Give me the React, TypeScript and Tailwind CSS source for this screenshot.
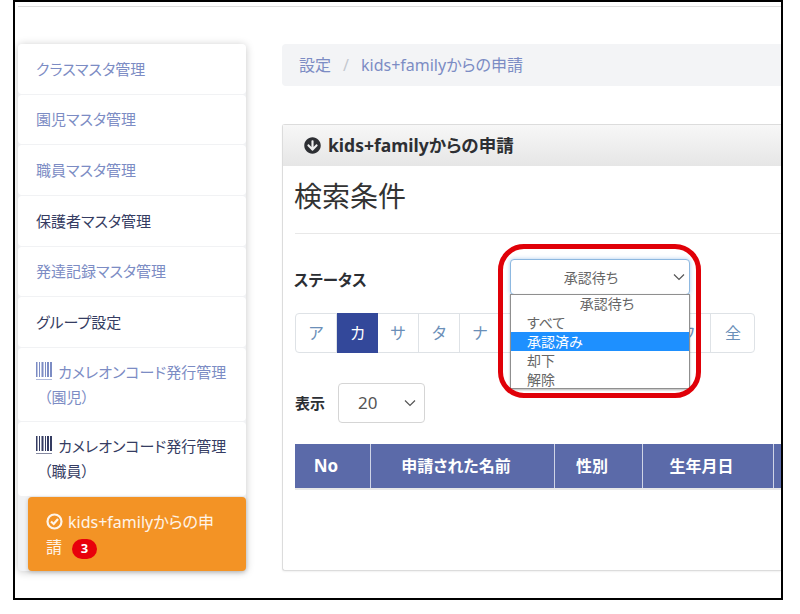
import React from "react";
import { FaArrowCircleDown } from "react-icons/fa";

const F = { fontFamily: '"Noto Sans","Noto Sans CJK JP",sans-serif' };

function Barcode({ color }: { color: string }) {
  return (
    <svg width="17" height="19" viewBox="0 0 17 19" className="inline-block align-[-3px] mr-[5px]" fill={color}>
      <rect x="0" y="0" width="1.5" height="15" />
      <rect x="3" y="0" width="1" height="15" />
      <rect x="5.5" y="0" width="2" height="15" />
      <rect x="9" y="0" width="1" height="15" />
      <rect x="11" y="0" width="2" height="15" />
      <rect x="14" y="0" width="2" height="15" />
      <rect x="0" y="17" width="16" height="1" opacity="0.6" />
    </svg>
  );
}

function Item({ children, dark, h = 50 }: { children: React.ReactNode; dark?: boolean; h?: number }) {
  return (
    <div
      className={`bg-white rounded-[4px] mb-px px-[18px] flex items-center text-[15px] leading-[25px] ${dark ? "text-[#353c62]" : "text-[#7c8cc4]"}`}
      style={{ height: h }}
    >
      <div>{children}</div>
    </div>
  );
}

const kana = ["ア", "カ", "サ", "タ", "ナ", "ハ", "マ", "ヤ", "ラ"];

function Chevron({ className }: { className: string }) {
  return (
    <svg viewBox="0 0 12 8" width="12" height="8" className={className} fill="none" stroke="#555" strokeWidth="1.2">
      <path d="M1 1.5 L6 6.5 L11 1.5" />
    </svg>
  );
}

export default function App() {
  return (
    <div className="w-[800px] h-[614px] bg-white overflow-hidden [font-feature-settings:'palt']" style={F}>
      <div className="relative ml-[13px] w-[770px] h-[600px] border-2 border-black overflow-hidden flex bg-white">
        <div className="absolute left-[3px] right-0 top-[4px] h-px bg-[#dddddd]" />

        {/* Sidebar */}
        <div className="ml-[3px] mt-[42px] w-[228px] h-[527px] shrink-0 rounded-[4px] bg-[#f1f2f4] shadow-[0_1px_8px_rgba(0,0,0,0.22)]">
          <Item>クラスマスタ管理</Item>
          <Item h={49}>園児マスタ管理</Item>
          <Item>職員マスタ管理</Item>
          <Item dark>保護者マスタ管理</Item>
          <Item h={49}>発達記録マスタ管理</Item>
          <Item dark>グループ設定</Item>
          <Item h={73}>
            <Barcode color="#7c8cc4" />
            <span>カメレオンコード発行管理</span>
            <br />
            <span className="ml-[8px]">（園児）</span>
          </Item>
          <Item dark h={74}>
            <Barcode color="#353c62" />
            <span>カメレオンコード発行管理</span>
            <br />
            <span className="ml-[8px]">（職員）</span>
          </Item>
          <div className="ml-[10px] h-[74px] rounded-[4px] bg-[#f39325] text-white/90 text-[16px] leading-[25px] px-[18px] pt-[13px] shadow-[0_1px_4px_rgba(0,0,0,0.2)]">
            <svg width="17" height="17" viewBox="0 0 17 17" className="inline-block align-[-2px] mr-[5px]" fill="none" stroke="currentColor" strokeWidth="2.2">
              <circle cx="8.5" cy="8.5" r="7" />
              <path d="M5 8.5 L7.7 11 L12 6" />
            </svg>
            kids+familyからの申請
            <span className="inline-flex items-center justify-center ml-[10px] w-[25px] h-[20px] rounded-full bg-[#e8000b] text-white text-[13px] font-bold leading-none">
              3
            </span>
          </div>
        </div>

        {/* Main */}
        <div className="ml-[36px] mt-[42px] flex-1 min-w-0">
          <div className="h-[42px] rounded-l-[4px] bg-[#f3f4f6] flex items-center px-[17px] text-[16px] text-[#7c8cc4]">
            設定<span className="mx-[12px] text-[#c4c8cf]">/</span>kids+familyからの申請
          </div>
          <div className="mt-[38px] h-[447px] border border-r-0 border-[#dcdcdc] rounded-l-[3px] bg-white shadow-[0_1px_2px_rgba(0,0,0,0.06)]">
            <div className="h-[41px] flex items-center px-[21px] bg-gradient-to-b from-[#f7f7f7] to-[#e6e6e6] text-[#2d2f33] text-[17.5px] font-bold">
              <FaArrowCircleDown className="text-[17px] mr-[7px]" />
              kids+familyからの申請
            </div>
            <div className="px-[12px]">
              <div className="h-[67px] flex items-center -ml-px pb-[8px] text-[28px] text-[#333]">検索条件</div>
              <div className="h-px bg-[#e8e8e8] -mr-[12px]" />
              <div className="h-[79px] flex items-center -ml-px text-[15.5px] font-bold text-[#2b2e33] pt-[14px]">ステータス</div>
              <div className="flex h-[40px] w-[460px] border border-[#dee2e6] rounded-[4px] text-[16px] text-[#6b8fb8]">
                {kana.map((k) => (
                  <div
                    key={k}
                    className={
                      k === "カ"
                        ? "w-[41px] -my-px flex items-center justify-center bg-[#33489a] text-white"
                        : "w-[41px] flex items-center justify-center border-r border-[#dee2e6]"
                    }
                  >
                    {k}
                  </div>
                ))}
                <div className="w-[46px] flex items-center justify-center border-r border-[#dee2e6]">ワ</div>
                <div className="flex-1 flex items-center justify-center pl-[1px]">全</div>
              </div>
              <div className="mt-[30px] flex items-center h-[40px]">
                <span className="text-[15px] font-bold text-[#2b2e33] mr-[13px]">表示</span>
                <div className="relative w-[87px] h-[40px] border border-[#d5d5d5] rounded-[4px] flex items-center pl-[19px] text-[17px] text-[#555]">
                  20
                  <Chevron className="absolute right-[8px] top-[15px]" />
                </div>
              </div>
              <div className="mt-[21px] -mr-[12px] flex h-[46px] bg-[#5b6aa9] text-white text-[16px] font-bold border-b-2 border-[#e8e8e8]">
                <div className="w-[76px] pr-[13px] flex items-center justify-center border-r border-[#cfd4e6] text-[17px]">No</div>
                <div className="w-[184px] pr-[13px] flex items-center justify-center border-r border-[#cfd4e6]">申請された名前</div>
                <div className="w-[88px] pr-[13px] flex items-center justify-center border-r border-[#cfd4e6]">性別</div>
                <div className="w-[131px] pr-[13px] flex items-center justify-center border-r border-[#cfd4e6]">生年月日</div>
                <div className="flex-1" />
              </div>
            </div>
          </div>
        </div>

        {/* Open select with highlight ring */}
        <div className="absolute left-[495px] top-[257px] w-[180px] h-[36px] bg-white border border-[#8db8e0] rounded-[4px] shadow-[0_0_4px_rgba(120,170,225,0.6)] flex items-center justify-center pr-[18px] text-[14px] text-[#666]">
          承認待ち
          <Chevron className="absolute right-[3px] top-[13px] mr-[1px]" />
        </div>
        <div className="absolute left-[495px] top-[292px] w-[180px] h-[95px] bg-white border border-[#8f8f8f] text-[14px] leading-[19px] text-[#666] shadow-[0_1px_2px_rgba(0,0,0,0.3)] overflow-hidden">
          <div className="-mt-px text-center pl-[14px]">承認待ち</div>
          <div className="pl-[16px]">すべて</div>
          <div className="pl-[16px] bg-[#1e90ff] text-white">承認済み</div>
          <div className="pl-[16px]">却下</div>
          <div className="pl-[16px]">解除</div>
        </div>
        <div className="absolute left-[483px] top-[242px] w-[203px] h-[154px] border-[5px] border-[#e00008] rounded-[26px]" />
      </div>
    </div>
  );
}
